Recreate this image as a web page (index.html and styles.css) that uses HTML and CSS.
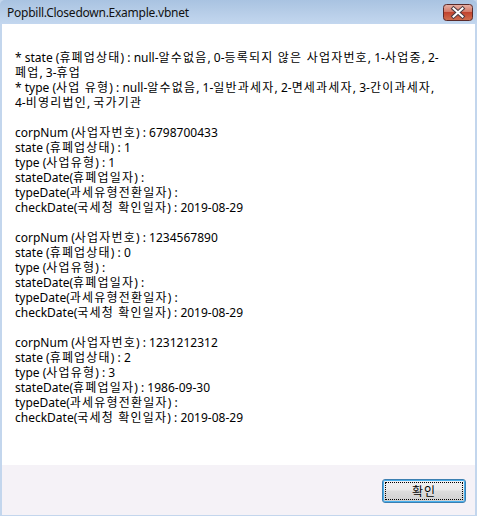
FILE: index.html
```html
<!DOCTYPE html>
<html>
<head>
<meta charset="utf-8">
<link rel="stylesheet" href="styles.css">
</head>
<body>
<div class="window">
  <div class="titlebar">
    <span class="title">Popbill.Closedown.Example.vbnet</span>
    <div class="close">
      <svg width="30" height="17" viewBox="0 0 30 17">
        <defs>
          <linearGradient id="cg" x1="0" y1="0" x2="0" y2="1">
            <stop offset="0" stop-color="#e8b3a8"/>
            <stop offset="0.45" stop-color="#d47a68"/>
            <stop offset="0.5" stop-color="#c2432e"/>
            <stop offset="1" stop-color="#d0704f"/>
          </linearGradient>
        </defs>
        <rect x="0.5" y="0.5" width="29" height="16" rx="3" fill="url(#cg)" stroke="#5a2a2a"/>
        <path d="M10.5 4.5 L19.5 12.5 M19.5 4.5 L10.5 12.5" stroke="#4a3a40" stroke-width="4" stroke-linecap="square"/>
        <path d="M10.5 4.5 L19.5 12.5 M19.5 4.5 L10.5 12.5" stroke="#ffffff" stroke-width="2" stroke-linecap="square"/>
      </svg>
    </div>
  </div>
  <div class="client">
    <div class="content">
      <div class="line">* state (<span class="k">휴폐업상태</span>) : null-<span class="k">알수없음</span>, 0-<span class="k">등록되지 않은 사업자번호</span>, 1-<span class="k">사업중</span>, 2-</div>
      <div class="line"><span class="k">폐업</span>, 3-<span class="k">휴업</span></div>
      <div class="line">* type (<span class="k">사업 유형</span>) : null-<span class="k">알수없음</span>, 1-<span class="k">일반과세자</span>, 2-<span class="k">면세과세자</span>, 3-<span class="k">간이과세자</span>,</div>
      <div class="line">4-<span class="k">비영리법인</span>, <span class="k">국가기관</span></div>
      <div class="line blank"></div>
      <div class="line">corpNum (<span class="k">사업자번호</span>) : 6798700433</div>
      <div class="line">state (<span class="k">휴폐업상태</span>) : 1</div>
      <div class="line">type (<span class="k">사업유형</span>) : 1</div>
      <div class="line">stateDate(<span class="k">휴폐업일자</span>) :</div>
      <div class="line">typeDate(<span class="k">과세유형전환일자</span>) :</div>
      <div class="line">checkDate(<span class="k">국세청 확인일자</span>) : 2019-08-29</div>
      <div class="line blank"></div>
      <div class="line">corpNum (<span class="k">사업자번호</span>) : 1234567890</div>
      <div class="line">state (<span class="k">휴폐업상태</span>) : 0</div>
      <div class="line">type (<span class="k">사업유형</span>) :</div>
      <div class="line">stateDate(<span class="k">휴폐업일자</span>) :</div>
      <div class="line">typeDate(<span class="k">과세유형전환일자</span>) :</div>
      <div class="line">checkDate(<span class="k">국세청 확인일자</span>) : 2019-08-29</div>
      <div class="line blank"></div>
      <div class="line">corpNum (<span class="k">사업자번호</span>) : 1231212312</div>
      <div class="line">state (<span class="k">휴폐업상태</span>) : 2</div>
      <div class="line">type (<span class="k">사업유형</span>) : 3</div>
      <div class="line">stateDate(<span class="k">휴폐업일자</span>) : 1986-09-30</div>
      <div class="line">typeDate(<span class="k">과세유형전환일자</span>) :</div>
      <div class="line">checkDate(<span class="k">국세청 확인일자</span>) : 2019-08-29</div>
    </div>
    <div class="footer">
      <button class="ok"><span class="focus">확인</span></button>
    </div>
  </div>
</div>
</body>
</html>
```

FILE: styles.css
```css
html, body {
  margin: 0;
  padding: 0;
  background: #ffffff;
}
.window {
  width: 477px;
  height: 516px;
  display: flex;
  flex-direction: column;
  background: #c3d6ed;
  box-sizing: border-box;
  font-family: "Noto Sans", "Noto Sans CJK KR", sans-serif;
  font-size: 12px;
  color: #000;
}
.titlebar {
  height: 24px;
  flex: none;
  display: flex;
  align-items: center;
  justify-content: space-between;
  padding: 0 4px 0 7px;
  background: linear-gradient(#a9c3e1, #b9cfe9 60%, #c3d7ef);
  border-radius: 5px 5px 0 0;
}
.title {
  font-size: 12px;
  color: #111;
  letter-spacing: -0.25px;
  padding-top: 1px;
}
.close {
  width: 30px;
  height: 17px;
  align-self: flex-start;
  margin-top: 4px;
}
.close svg {
  display: block;
}
.client {
  flex: 1;
  display: flex;
  flex-direction: column;
  margin: 0 2px 1px 2px;
  background: #ffffff;
}
.content {
  flex: 1;
  padding: 26px 0 0 13px;
}
.line {
  height: 15px;
  line-height: 15px;
  white-space: nowrap;
}
.k {
  letter-spacing: 1.2px;
}
.footer {
  height: 50px;
  flex: none;
  background: #f5f2f7;
  display: flex;
  justify-content: flex-end;
  align-items: flex-start;
  padding: 14px 9px 0 0;
  box-sizing: border-box;
}
.ok {
  width: 84px;
  height: 24px;
  margin: 0;
  padding: 2px;
  border: 1px solid #3c7fb1;
  border-radius: 3px;
  background: linear-gradient(#f2f2f2, #ebebeb 45%, #dddddd 50%, #cfcfcf);
  box-shadow: inset 0 0 0 1px #48b0ee;
  font-family: "Noto Sans CJK KR", sans-serif;
  font-size: 12px;
  color: #000;
  display: flex;
  box-sizing: border-box;
}
.focus {
  flex: 1;
  border: 1px dotted #000;
  display: flex;
  align-items: center;
  justify-content: center;
  line-height: 14px;
  letter-spacing: 1px;
}
```
